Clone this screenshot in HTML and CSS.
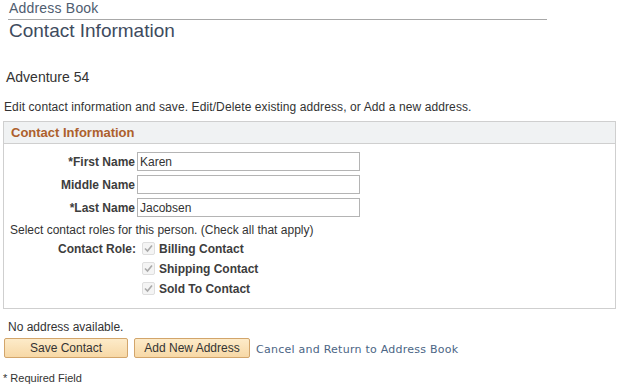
FILE: index.html
```html
<!DOCTYPE html>
<html lang="en">
<head>
    <meta charset="UTF-8">
    <title>Contact Information</title>
    <link rel="stylesheet" href="styles.css">
</head>
<body>
    <div class="page">
        <div class="crumb">Address Book</div>
        <h1 class="title">Contact Information</h1>

        <div class="customer">Adventure 54</div>

        <p class="intro">Edit contact information and save. Edit/Delete existing address, or Add a new address.</p>

        <div class="box">
            <div class="box-header">Contact Information</div>
            <div class="box-body">
                <div class="form-grid">
                    <label class="field-label">*First Name</label>
                    <input class="field" type="text" value="Karen">
                    <label class="field-label">Middle Name</label>
                    <input class="field" type="text" value="">
                    <label class="field-label">*Last Name</label>
                    <input class="field" type="text" value="Jacobsen">
                </div>

                <p class="roles-hint">Select contact roles for this person. (Check all that apply)</p>

                <div class="roles">
                    <span class="field-label role-label">Contact Role:</span>
                    <div class="role-list">
                        <div class="role"><span class="check"><svg viewBox="0 0 13 13" width="13" height="13"><path d="M3 6.5 L5.5 9 L10 3.5" fill="none" stroke="#a9a9a9" stroke-width="1.6"/></svg></span>Billing Contact</div>
                        <div class="role"><span class="check"><svg viewBox="0 0 13 13" width="13" height="13"><path d="M3 6.5 L5.5 9 L10 3.5" fill="none" stroke="#a9a9a9" stroke-width="1.6"/></svg></span>Shipping Contact</div>
                        <div class="role"><span class="check"><svg viewBox="0 0 13 13" width="13" height="13"><path d="M3 6.5 L5.5 9 L10 3.5" fill="none" stroke="#a9a9a9" stroke-width="1.6"/></svg></span>Sold To Contact</div>
                    </div>
                </div>
            </div>
        </div>

        <p class="no-address">No address available.</p>

        <div class="actions">
            <button class="btn btn-save">Save Contact</button>
            <button class="btn btn-add">Add New Address</button>
            <a class="cancel" href="#">Cancel and Return to Address Book</a>
        </div>

        <p class="required">* Required Field</p>
    </div>
</body>
</html>
```

FILE: styles.css
```css
body {
    margin: 0;
    font-family: "Liberation Sans", Arial, sans-serif;
    color: #333;
    background-color: white;
}

.page {
    width: 620px;
}

.crumb {
    margin-left: 8px;
    width: 538px;
    padding-left: 1px;
    font-size: 14px;
    line-height: 16px;
    letter-spacing: 0.2px;
    color: #4f5d70;
    padding-bottom: 3px;
    border-bottom: 1px solid #a8a8a8;
}

.title {
    margin: 0 0 0 9px;
    font-size: 19px;
    font-weight: normal;
    line-height: 22px;
    color: #3e4b5e;
}

.customer {
    margin: 27px 0 0 6px;
    font-size: 14px;
    line-height: 16px;
    color: #333;
}

.intro {
    margin: 15px 0 0 4px;
    font-size: 12px;
    line-height: 14px;
    letter-spacing: 0.1px;
}

.box {
    margin: 7px 0 0 3px;
    width: 611px;
    border: 1px solid #cfcfcf;
}

.box-header {
    height: 21px;
    padding-left: 7px;
    background-color: #f0f2f3;
    border-bottom: 1px solid #cfcfcf;
    color: #ad602c;
    font-size: 13px;
    font-weight: bold;
    line-height: 21px;
}

.box-body {
    padding: 8px 0 9px 0;
}

.form-grid {
    display: grid;
    grid-template-columns: 131px 223px;
    column-gap: 2px;
    row-gap: 4px;
    align-items: center;
}

.field-label {
    text-align: right;
    font-size: 12px;
    font-weight: bold;
    color: #3d3d3d;
}

.field {
    box-sizing: border-box;
    height: 19px;
    width: 223px;
    margin: 0;
    padding: 0 2px;
    border: 1px solid #b4b4b4;
    font-family: "Liberation Sans", Arial, sans-serif;
    font-size: 12px;
    color: #333;
}

.roles-hint {
    margin: 5px 0 0 6px;
    font-size: 12px;
    line-height: 16px;
}

.roles {
    display: grid;
    grid-template-columns: 132px auto;
    column-gap: 6px;
    margin-top: 1px;
}

.role-label {
    line-height: 20px;
}

.role {
    display: flex;
    align-items: center;
    gap: 4px;
    height: 20px;
    font-size: 12px;
    font-weight: bold;
    color: #3d3d3d;
}

.check {
    display: flex;
    width: 13px;
    height: 13px;
    box-sizing: border-box;
    border: 1px solid #dedede;
    border-radius: 2px;
    background-color: #f4f4f4;
    margin-top: -2px;
}

.check svg {
    margin: -1px;
}

.no-address {
    margin: 11px 0 0 8px;
    font-size: 12px;
    line-height: 14px;
}

.actions {
    display: flex;
    align-items: center;
    margin: 4px 0 0 4px;
    gap: 6px;
}

.btn {
    height: 20px;
    padding: 0;
    border: 1px solid #d2a56b;
    border-radius: 2px;
    background: linear-gradient(#fdebc9, #f7d8a6);
    font-family: "Liberation Sans", Arial, sans-serif;
    font-size: 12px;
    color: #333;
}

.btn-save {
    width: 124px;
}

.btn-add {
    width: 116px;
}

.cancel {
    margin-top: 3px;
    font-family: "DejaVu Sans", Verdana, sans-serif;
    font-size: 11px;
    letter-spacing: 0.25px;
    color: #4b6584;
    text-decoration: none;
}

.required {
    margin: 14px 0 0 3px;
    font-size: 11px;
    line-height: 13px;
}
```
